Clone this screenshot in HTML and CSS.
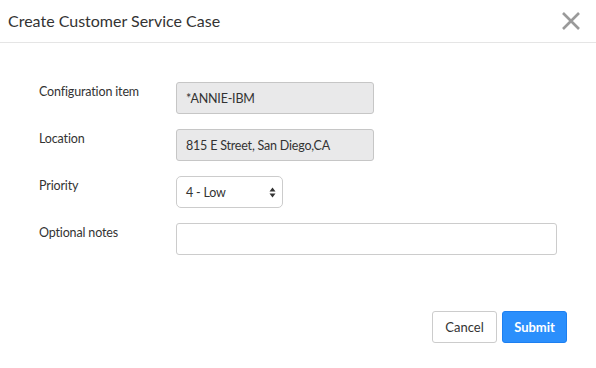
FILE: index.html
```html
<!DOCTYPE html>
<html>
<head>
<meta charset="utf-8">
<link rel="stylesheet" href="styles.css">
</head>
<body>
<div class="modal">
  <div class="header">
    <h1 class="title">Create Customer Service Case</h1>
    <button class="close" aria-label="Close">
      <svg width="20" height="20" viewBox="0 0 20 20"><path d="M2 2 L18 18 M18 2 L2 18" stroke="#9a9a9a" stroke-width="2.6" stroke-linecap="butt"/></svg>
    </button>
  </div>
  <div class="body">
    <div class="row">
      <label class="label">Configuration item</label>
      <div class="field readonly w-md">*ANNIE-IBM</div>
    </div>
    <div class="row">
      <label class="label">Location</label>
      <div class="field readonly w-md">815 E Street, San Diego,CA</div>
    </div>
    <div class="row">
      <label class="label">Priority</label>
      <div class="field select w-sm">
        <span>4 - Low</span>
        <svg class="arrows" width="7" height="11" viewBox="0 0 7 11"><path d="M3.5 0.5 L6.5 4.5 L0.5 4.5 Z M3.5 10.5 L6.5 6.5 L0.5 6.5 Z" fill="#333"/></svg>
      </div>
    </div>
    <div class="row">
      <label class="label">Optional notes</label>
      <div class="field w-lg"></div>
    </div>
  </div>
  <div class="footer">
    <button class="btn cancel">Cancel</button>
    <button class="btn submit">Submit</button>
  </div>
</div>
</body>
</html>
```
FILE: styles.css
```css
* { box-sizing: border-box; }
html, body { margin: 0; padding: 0; background: #fff; }
body { font-family: Lato, "Open Sans", sans-serif; color: #333; }
.modal { width: 596px; height: 368px; display: flex; flex-direction: column; }
.header { height: 43px; border-bottom: 1px solid #e5e5e5; display: flex; align-items: center; justify-content: space-between; padding: 0 15px 1px 8px; }
.title { margin: 0; font-size: 16px; font-weight: 400; color: #333; }
.close { border: 0; background: none; padding: 0; width: 20px; height: 20px; display: flex; }
.body { padding: 39px 0 0 39px; display: flex; flex-direction: column; gap: 15px; }
.row { display: flex; align-items: flex-start; height: 32px; }
.label { width: 137px; font-size: 12.5px; letter-spacing: -0.15px; padding-top: 2px; color: #333; }
.field { height: 32px; border: 1px solid #ccc; border-radius: 3px; font-size: 12.5px; letter-spacing: -0.2px; display: flex; align-items: center; padding: 0 9px; color: #333; background: #fff; }
.readonly { background: #e9e9ea; border-color: #c6c6c6; }
.w-md { width: 198px; }
.w-sm { width: 107px; justify-content: space-between; padding-right: 6px; border-radius: 5px; }
.w-lg { width: 381px; }
.footer { margin-top: auto; display: flex; justify-content: flex-end; gap: 5px; padding: 0 29px 25px 0; }
.btn { height: 32px; width: 65px; border-radius: 3px; font-family: inherit; font-size: 13px; padding: 0; }
.cancel { background: #fff; border: 1px solid #ccc; color: #333; }
.submit { background: #2b8ffc; border: 1px solid #1d7ff0; color: #fff; font-weight: 700; }
```
